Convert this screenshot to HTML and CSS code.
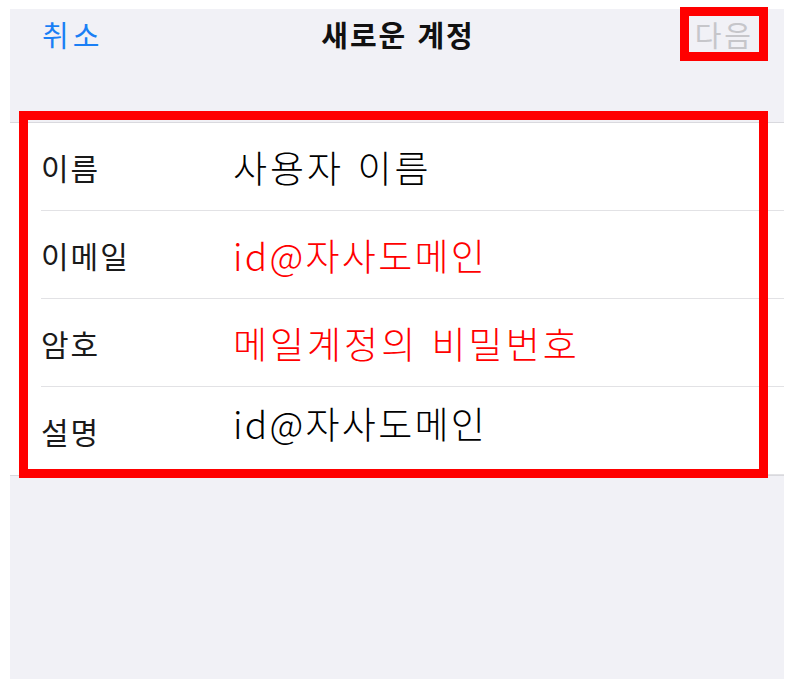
FILE: index.html
```html
<!DOCTYPE html>
<html lang="ko">
<head>
    <meta charset="UTF-8">
    <meta name="viewport" content="width=device-width, initial-scale=1.0">
    <title>새로운 계정</title>
    <link rel="stylesheet" href="styles.css">
</head>
<body>

    <div class="screen">
        <!-- 상단 바 -->
        <div class="nav">
            <span class="nav-cancel">취소</span>
            <span class="nav-title">새로운 계정</span>
            <span class="nav-next">다음</span>
        </div>

        <!-- 계정 정보 -->
        <div class="form">
            <div class="row">
                <span class="label">이름</span>
                <span class="value">사용자 이름</span>
            </div>
            <div class="row">
                <span class="label">이메일</span>
                <span class="value red id">id@자사도메인</span>
            </div>
            <div class="row">
                <span class="label">암호</span>
                <span class="value red">메일계정의 비밀번호</span>
            </div>
            <div class="row">
                <span class="label">설명</span>
                <span class="value id raised">id@자사도메인</span>
            </div>
            <div class="mark"></div>
        </div>
    </div>

</body>
</html>
```

FILE: styles.css
```css
body {
    margin: 0;
    padding: 0;
    background-color: #fff;
    font-family: 'Noto Sans CJK KR', 'Noto Sans', sans-serif;
}

.screen {
    width: 774px;
    height: 670px;
    margin: 9px 0 0 10px;
    background-color: #f1f1f6;
}

.nav {
    display: grid;
    grid-template-columns: 1fr auto 1fr;
    align-items: start;
    height: 114px;
    padding: 5px 32px 0 32px;
    box-sizing: border-box;
    border-bottom: 1px solid #d9d9de;
    font-size: 29px;
    line-height: 40px;
    letter-spacing: 2px;
}

.nav-cancel {
    color: #1a7ff5;
    justify-self: start;
    letter-spacing: 4px;
}

.nav-title {
    color: #111;
    font-weight: bold;
    margin-right: -2px;
}

.nav-next {
    justify-self: end;
    margin-top: -7px;
    margin-right: -16px;
    padding: 0 5px 0 6px;
    line-height: 36px;
    color: #c6c6ca;
    letter-spacing: 3px;
    border: 9px solid #ff0000;
}

.form {
    position: relative;
    background-color: #fff;
    padding-left: 31px;
    border-bottom: 1px solid #d9d9de;
}

.row {
    display: flex;
    align-items: center;
    height: 88px;
    box-sizing: border-box;
    border-bottom: 1px solid #e2e2e5;
}

.row:last-of-type {
    border-bottom: none;
}

.label {
    width: 192px;
    font-size: 30px;
    letter-spacing: 2px;
    color: #1a1a1a;
}

.value {
    font-size: 37px;
    font-weight: 300;
    letter-spacing: 3px;
    color: #000;
}

.value.id {
    letter-spacing: 2.3px;
}

.value.red {
    color: #ff0000;
}

.value.raised {
    margin-bottom: 16px;
}

/* 빨간 표시 박스 */
.mark {
    position: absolute;
    top: -12px;
    left: 9px;
    right: 16px;
    bottom: -3px;
    border: 9px solid #ff0000;
}
```
